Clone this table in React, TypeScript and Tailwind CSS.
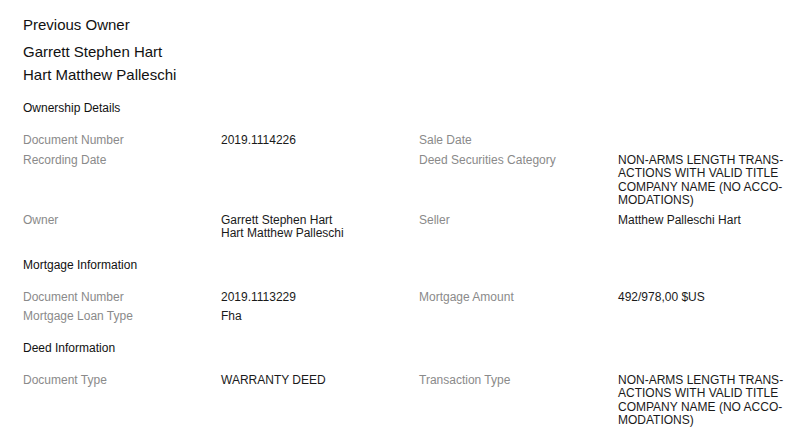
const rowCls = 'py-[3px] leading-[13.5px]';

function Label({ children }: { children?: React.ReactNode }) {
  return <div className={`${rowCls} text-[#8a8a8a]`}>{children}</div>;
}

function Value({ children }: { children?: React.ReactNode }) {
  return <div className={`${rowCls} text-[#1a1a1a]`}>{children}</div>;
}

function Heading({ children, top }: { children: React.ReactNode; top: string }) {
  return <h3 className={`${top} mb-[16px] text-[12px] leading-[14px] text-[#111]`}>{children}</h3>;
}

const longCategory = (
  <>
    NON-ARMS LENGTH TRANS-
    <br />
    ACTIONS WITH VALID TITLE
    <br />
    COMPANY NAME (NO ACCO-
    <br />
    MODATIONS)
  </>
);

export default function App() {
  return (
    <div
      className="w-[797px] h-[442px] overflow-hidden bg-white pl-[23px] pt-[13px] text-[12px]"
      style={{ fontFamily: '"Liberation Sans", Arial, sans-serif' }}
    >
      {/* Previous owner */}
      <div className="text-[15px] leading-[23px] text-[#111]">Previous Owner</div>
      <div className="mt-[4px] text-[15px] leading-[23px] text-[#111]">
        <div>Garrett Stephen Hart</div>
        <div>Hart Matthew Palleschi</div>
      </div>

      {/* Ownership details */}
      <Heading top="mt-[15px]">Ownership Details</Heading>
      <div className="grid grid-cols-[198px_198px_199px_1fr]">
        <Label>Document Number</Label>
        <Value>2019.1114226</Value>
        <Label>Sale Date</Label>
        <Value />

        <Label>Recording Date</Label>
        <Value />
        <Label>Deed Securities Category</Label>
        <Value>{longCategory}</Value>

        <Label>Owner</Label>
        <Value>
          Garrett Stephen Hart
          <br />
          Hart Matthew Palleschi
        </Value>
        <Label>Seller</Label>
        <Value>Matthew Palleschi Hart</Value>
      </div>

      {/* Mortgage */}
      <Heading top="mt-[14px]">Mortgage Information</Heading>
      <div className="grid grid-cols-[198px_198px_199px_1fr]">
        <Label>Document Number</Label>
        <Value>2019.1113229</Value>
        <Label>Mortgage Amount</Label>
        <Value>492/978,00 $US</Value>

        <Label>Mortgage Loan Type</Label>
        <Value>Fha</Value>
        <Label />
        <Value />
      </div>

      {/* Deed */}
      <Heading top="mt-[14px]">Deed Information</Heading>
      <div className="grid grid-cols-[198px_198px_199px_1fr]">
        <Label>Document Type</Label>
        <Value>WARRANTY DEED</Value>
        <Label>Transaction Type</Label>
        <Value>{longCategory}</Value>
      </div>
    </div>
  );
}
